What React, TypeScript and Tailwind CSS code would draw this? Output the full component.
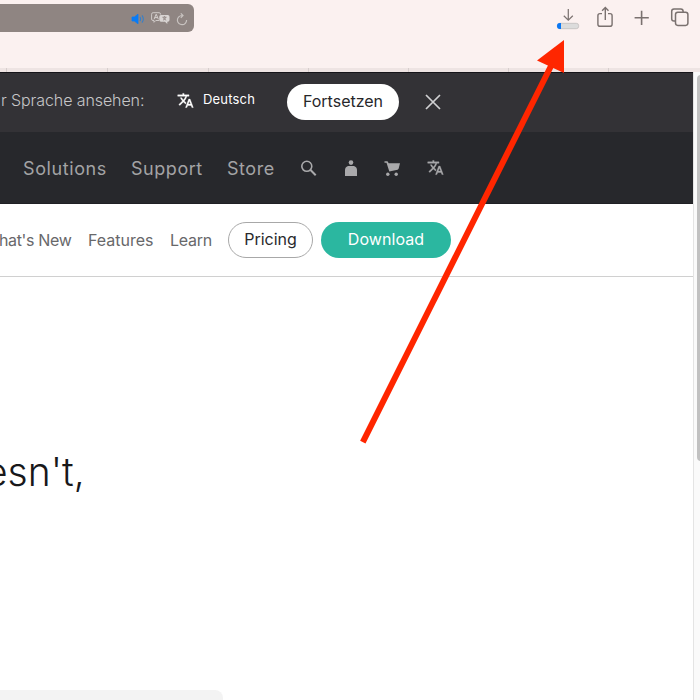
import React from "react";

function TranslateIcon({ className }: { className: string }) {
  return (
    <svg viewBox="0 0 24 24" className={className} fill="currentColor">
      <path d="m12.87 15.07-2.54-2.51.03-.03A17.52 17.52 0 0 0 14.07 6H17V4h-7V2H8v2H1v2h11.17C11.5 7.92 10.44 9.75 9 11.35 8.07 10.32 7.3 9.19 6.69 8h-2c.73 1.63 1.73 3.17 2.98 4.56l-5.09 5.02L4 19l5-5 3.11 3.11.76-2.04zM18.5 10h-2L12 22h2l1.12-3h4.75L21 22h2l-4.5-12zm-2.62 7 1.62-4.33L19.12 17h-3.24z" stroke="currentColor" strokeWidth="0.5" />
    </svg>
  );
}

function Toolbar() {
  return (
    <header className="h-[68px] flex items-start bg-[#fbf1f0]">
      <div className="w-[194px] h-7 mt-1 rounded-r-[6px] bg-[#8f8582] flex items-center">
        <svg viewBox="0 0 14 12" className="ml-[131px] mt-px w-3.5 h-3 shrink-0" fill="none">
          <path d="M1 4h2.4L7 1.2v9.6L3.4 8H1Z" fill="#087bf6" stroke="#087bf6" strokeWidth=".8" strokeLinejoin="round" />
          <path d="M9 4q1.2 2 0 4M11 2.4q2.6 3.6 0 7.2" stroke="#377fc8" strokeWidth="1.1" />
        </svg>
        <svg viewBox="0 0 19 13" className="ml-1.5 w-[19px] h-[13px] shrink-0" fill="none">
          <path d="M8 8.5H4.8L3 10.3V8.5H2Q.6 8.5.6 7V2.2Q.6.7 2.1.7H8Q9.7.7 9.7 2.6" stroke="#cfcac8" strokeWidth="1" />
          <path d="M3 7.3 5.2 2.2 7.4 7.3M3.8 5.6h2.8" stroke="#d5d0ce" strokeWidth="1" />
          <path d="M10 3h6.8Q18.5 3 18.5 4.7V8q0 1.7-1.7 1.7h-.5V12L14 9.7h-4Q8.3 9.7 8.3 8V4.7Q8.3 3 10 3Z" fill="#d9d5d3" />
          <path d="M11.5 5.2h4M13.5 4.2v1M12 8.2q2.3-1 2.8-3M12.2 5.4q.8 2 3 2.8" stroke="#8f8582" strokeWidth=".9" />
        </svg>
        <svg viewBox="0 0 12 13" className="ml-[6px] mt-0.5 w-3 h-[13px] shrink-0" fill="none" stroke="#c8c3c0" strokeWidth="1.2">
          <path d="M10.6 7A4.6 4.6 0 1 1 6 2.5h1M4.8.4 7 2.5 4.8 4.8" />
        </svg>
      </div>
      <svg viewBox="0 0 24 22" className="ml-[362px] mt-2 w-6 h-[22px] shrink-0" fill="none">
        <path d="M12.3 1v11M7.8 7.8l4.5 4.4 4.5-4.4" stroke="#7d7472" strokeWidth="1.25" />
        <rect x="1.3" y="15.3" width="21.4" height="5.4" rx="2.4" fill="#dcdcdc" stroke="#b5b2b1" strokeWidth=".6" />
        <path d="M5 15H3.8Q1 15 1 18t2.8 3H5Z" fill="#0a78f5" />
      </svg>
      <svg viewBox="0 0 18 22" className="ml-4 mt-1.5 w-[18px] h-[22px] shrink-0" fill="none" stroke="#7a716f" strokeWidth="1.4">
        <path d="M6 7.6H4Q1.9 7.6 1.9 9.7v8.5q0 2.1 2.1 2.1h10q2.1 0 2.1-2.1V9.7q0-2.1-2.1-2.1h-2M9.3 14V1.6M6.1 4.8l3.2-3.2 3.2 3.2" />
      </svg>
      <svg viewBox="0 0 16 16" className="ml-5 mt-2.5 w-4 h-4 shrink-0" stroke="#7a716f" strokeWidth="1.6">
        <path d="M7.6.7v14.2M.6 7.8h14.2" />
      </svg>
      <svg viewBox="0 0 20 20" className="ml-5 mt-[7px] w-5 h-5 shrink-0" fill="none" stroke="#7a716f" strokeWidth="1.5">
        <path d="M5.5 14H4q-2.3 0-2.3-2.3V4.2q0-2.3 2.3-2.3h6.8q2.3 0 2.3 2.3v1" />
        <rect x="5.5" y="5.2" width="12.4" height="13.2" rx="2.3" />
      </svg>
    </header>
  );
}

function LanguageBanner() {
  return (
    <div className="h-[60px] flex items-center bg-[#333236] border-t border-[#151419]">
      <span className="w-[144px] ml-px text-base font-light tracking-[-0.006em] text-[#c6c6c8] pb-1.5 whitespace-nowrap shrink-0">r Sprache ansehen:</span>
      <TranslateIcon className="w-[17px] h-[17px] ml-8 mb-[5px] text-white shrink-0" />
      <span className="w-[73px] pl-[9px] mb-[5px] text-[13px] text-white tracking-[0.015em] shrink-0">Deutsch</span>
      <button className="ml-5 pb-0.5 mb-px w-[112px] h-9 rounded-full bg-white text-base text-[#27272a] shrink-0">Fortsetzen</button>
      <svg viewBox="0 0 16 16" className="ml-[26px] mb-0.5 w-4 h-4 shrink-0" stroke="#d0d0d2" strokeWidth="1.7">
        <path d="m1 1 14 14M15 1 1 15" />
      </svg>
    </div>
  );
}

function MainNav() {
  return (
    <nav className="h-[72px] flex items-center bg-[#27282c] text-[#a9a9ab] text-lg border-b border-[#202024]">
      <a className="ml-[23px] w-[108px] pt-0.5 text-[#a3a3a5] tracking-[0.033em]">Solutions</a>
      <a className="w-[95px] pt-0.5 text-[#a3a3a5] tracking-[0.03em]">Support</a>
      <a className="w-[73px] pt-0.5 pl-px text-[#a3a3a5] tracking-[0.03em]">Store</a>
      <svg viewBox="0 0 18 18" className="w-[18px] h-[18px] shrink-0" fill="none" stroke="currentColor">
        <circle cx="7.8" cy="7.3" r="5" strokeWidth="1.6" />
        <path d="m11.3 10.8 5.4 5.4" strokeWidth="2" />
      </svg>
      <svg viewBox="0 0 14 18" className="ml-[27px] mt-0.5 w-3.5 h-[18px] shrink-0" fill="currentColor">
        <circle cx="7" cy="2.6" r="2.3" />
        <path d="M4 5.9h6q3 1 3 4v6H1v-6q0-3 3-4Z" />
      </svg>
      <svg viewBox="0 0 18 18" className="ml-[25px] mt-0.5 w-[18px] h-[18px] shrink-0" fill="currentColor">
        <path d="M1.5 1.2h3L5.7 3.3H17L15.6 8.7l-1 1-8.3 1.9L3.5 2.7h-2Z" />
        <circle cx="4.8" cy="14.3" r="1.7" />
        <circle cx="13.2" cy="14.3" r="1.7" />
      </svg>
      <TranslateIcon className="ml-[26px] w-[17px] h-[17px] shrink-0" />
    </nav>
  );
}

function ProductNav() {
  return (
    <nav className="h-[73px] flex items-center bg-white text-[#68686a] text-base border-b border-[#d0d0d0]">
      <a className="w-[88px] whitespace-nowrap -ml-px tracking-[-0.022em]">hat's New</a>
      <a className="w-[82px] ml-px">Features</a>
      <a className="w-[58px] tracking-[-0.015em]">Learn</a>
      <button className="w-[85px] h-9 rounded-full border border-[#a8a8a8] text-[#29292c] pb-0.5">Pricing</button>
      <button className="ml-2 w-[130px] h-9 rounded-full bg-[#2bb7a0] text-white tracking-[0.005em] pb-0.5">Download</button>
    </nav>
  );
}

export default function App() {
  return (
    <div className="relative w-[700px] h-[700px] overflow-hidden flex flex-col bg-white font-['Inter','Liberation_Sans',sans-serif]">
      <Toolbar />
      <div className="h-1 flex shrink-0 bg-[#eee4e3]">
        <div className="w-[7px] border-r border-[#d7cecd]" />
        <div className="w-[101px] border-r border-[#d7cecd]" />
        <div className="w-[101px] border-r border-[#d7cecd]" />
        <div className="w-[100px] border-r border-[#d7cecd]" />
        <div className="w-[100px] border-r border-[#d7cecd]" />
        <div className="w-[100px] border-r border-[#d7cecd]" />
        <div className="w-[100px] border-r border-[#d7cecd]" />
      </div>
      <div className="flex flex-1 min-h-0">
        <main className="w-[693px] flex flex-col">
          <LanguageBanner />
          <MainNav />
          <ProductNav />
          <h1 className="mt-[171px] h-[60px] text-[39px] leading-[48px] font-light text-[#18181a] -ml-[15px]">esn't,</h1>
          <div className="mt-auto w-[223px] h-2.5 rounded-tr-[8px] bg-[#f3f3f3]" />
        </main>
        <aside className="w-[7px] pl-[3px] pt-[3px] bg-[#fafafa] border-l border-[#e4e4e4]">
          <div className="w-[6px] h-[386px] rounded-l-[4px] bg-[#c1c1c1]" />
        </aside>
      </div>
      <svg viewBox="0 0 700 700" className="absolute inset-0 w-[700px] h-[700px] pointer-events-none">
        <path d="M362.8 442.2 551 66" stroke="#ff2600" strokeWidth="6" />
        <path d="M564 40v33l-27-12.5Z" fill="#ff2600" />
      </svg>
    </div>
  );
}
